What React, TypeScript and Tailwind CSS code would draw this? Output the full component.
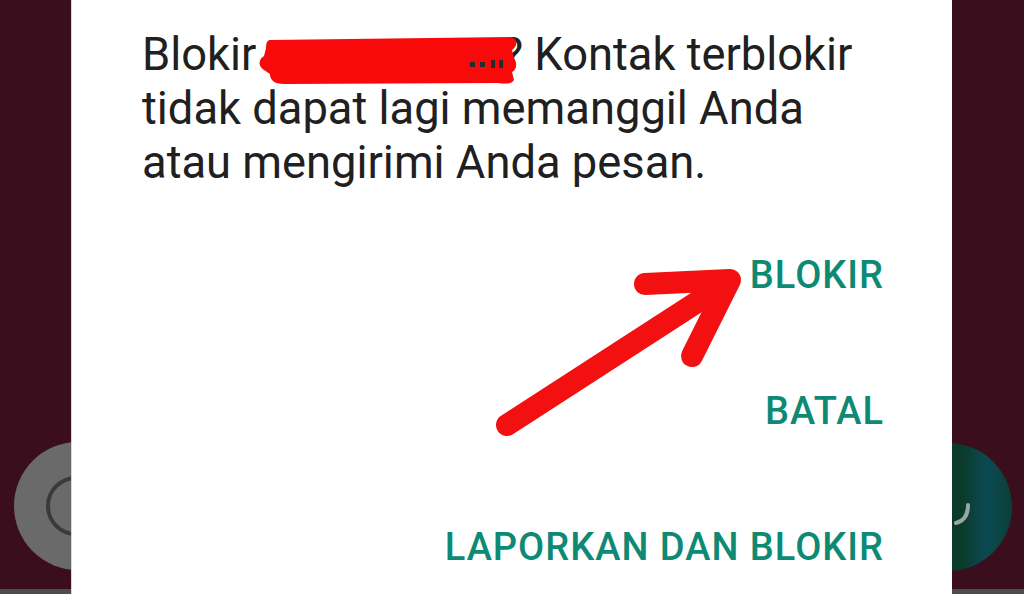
import React from "react";

export default function App() {
  return (
    <div className="relative w-[1024px] h-[594px] overflow-hidden bg-[#3a0e1c]" style={{ fontFamily: "Roboto, 'Noto Sans', sans-serif" }}>
      {/* bottom strip */}
      <div className="absolute left-0 right-0 bottom-0 h-[5px] bg-[#4d4d4d]" />
      {/* left emoji button */}
      <div className="absolute left-[14px] top-[442px] w-[128px] h-[128px] rounded-full bg-[#6a6a6a]">
        <div className="absolute left-[32px] top-[34px] w-[60px] h-[60px] rounded-full border-[4px] border-[#3a3a3a]" />
      </div>
      {/* right mic button */}
      <div className="absolute left-[884px] top-[443px] w-[128px] h-[128px] rounded-full bg-[linear-gradient(90deg,#0a3a28_0%,#0a3a2a_60%,#0b4a52_80%,#0a3f38_100%)]">
        <svg className="absolute left-[64px] top-[56px]" width="30" height="30" viewBox="0 0 30 30">
          <path d="M20 6 C20 16 16 22 8 24" stroke="#9aa6a2" strokeWidth="4" fill="none" strokeLinecap="round" />
        </svg>
      </div>

      {/* dialog */}
      <div className="absolute left-[71px] top-0 w-[881px] h-[594px] bg-white border-l border-[#d8d8d8] flex flex-col pl-[70px] pr-[68px]">
        <p className="mt-[28px] text-[45.3px] leading-[54px] text-[#202020]">
          Blokir{" "}
          <span className="inline-block w-[234px] h-[40px] align-baseline" />
          ? Kontak terblokir tidak dapat lagi memanggil Anda atau mengirimi Anda pesan.
        </p>
        <div className="mt-[66px] flex flex-col items-end gap-[98px] text-[38px] leading-[38px] font-medium text-[#0e8a74] tracking-[1px]">
          <span>BLOKIR</span>
          <span>BATAL</span>
          <span>LAPORKAN DAN BLOKIR</span>
        </div>
      </div>

      {/* red redaction */}
      <svg className="absolute left-0 top-0 pointer-events-none" width="1024" height="594" viewBox="0 0 1024 594">
        <path
          d="M270 40 L510 37 C518 38 518 46 512 50 L514 58 C518 64 516 70 512 72 L514 80 C512 84 506 84 498 83 L284 84 C274 84 270 80 270 74 L264 70 C258 66 258 60 264 56 L266 48 C266 42 268 40 270 40 Z"
          fill="#f80a0a"
        />
        <g fill="#2a2a2a">
          <rect x="470" y="62" width="5" height="5" />
          <rect x="480" y="62" width="5" height="5" />
          <rect x="491" y="60" width="4" height="8" />
          <rect x="499" y="60" width="4" height="8" />
        </g>
        {/* arrow */}
        <g stroke="#f21010" strokeWidth="22" strokeLinecap="round" strokeLinejoin="round" fill="none">
          <path d="M507 425 L722 286" />
          <path d="M645 284 L730 280 L692 356" />
        </g>
      </svg>
    </div>
  );
}
